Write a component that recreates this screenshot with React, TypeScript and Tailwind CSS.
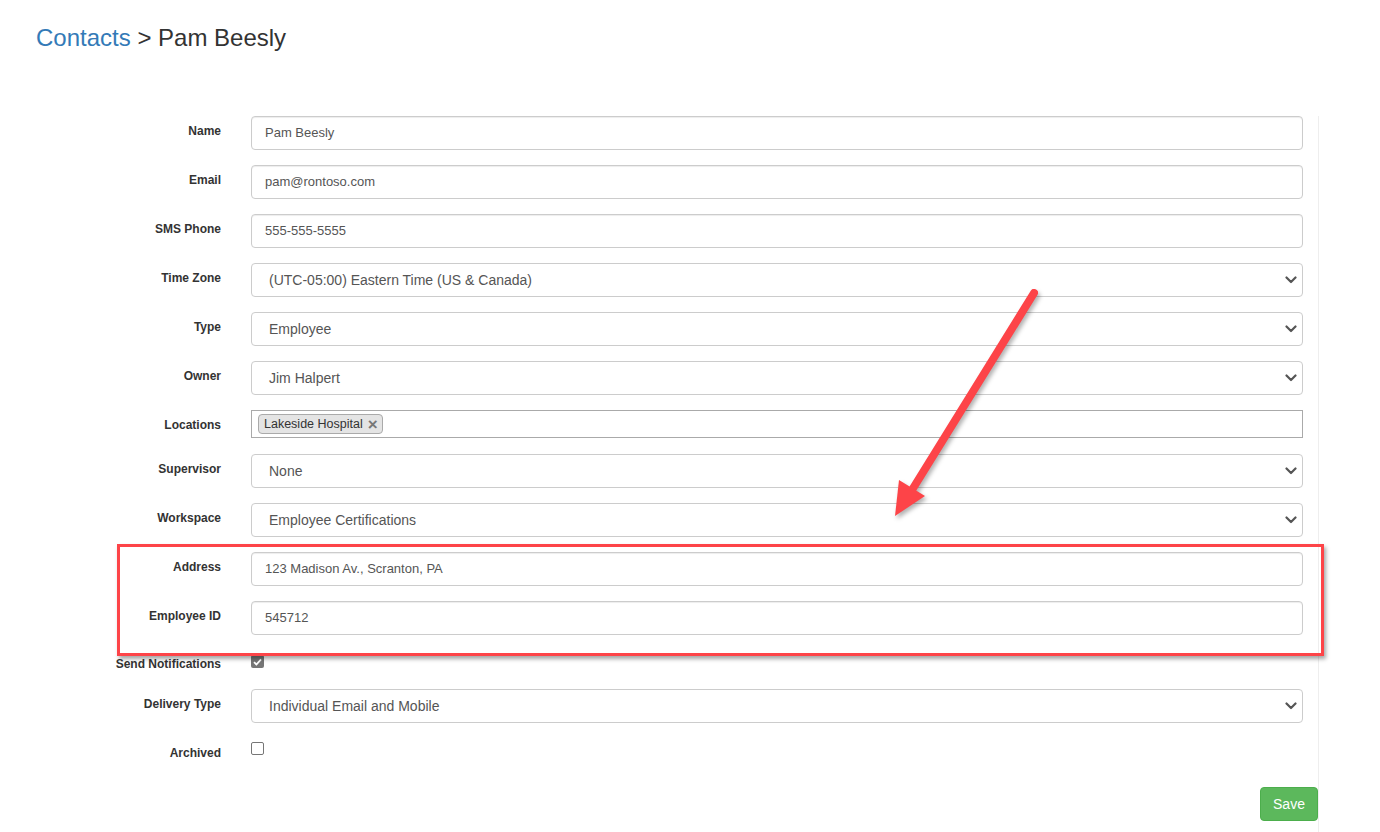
import { ReactNode } from "react"

const font = { fontFamily: '"Liberation Sans", Arial, Helvetica, sans-serif' }

function Chevron() {
    return (
        <svg width="12" height="8" viewBox="0 0 12 8" className="shrink-0">
            <polyline points="1.5,1.5 6,6 10.5,1.5" fill="none" stroke="#555" strokeWidth="2.2" strokeLinecap="round" strokeLinejoin="round" />
        </svg>
    )
}

function TextInput({ value }: { value: string }) {
    return (
        <div className="h-[34px] flex items-center pl-[13px] border border-[#ccc] rounded-[4px] bg-white text-[13px] text-[#555] shadow-[inset_0_1px_1px_rgba(0,0,0,0.075)]">
            {value}
        </div>
    )
}

function SelectBox({ value }: { value: string }) {
    return (
        <div className="h-[34px] flex items-center justify-between pl-[17px] pr-[5px] border border-[#ccc] rounded-[4px] bg-white text-[14px] text-[#555]">
            <span>{value}</span>
            <Chevron />
        </div>
    )
}

function Checkbox({ checked }: { checked?: boolean }) {
    if (checked) {
        return (
            <div className="w-[13px] h-[13px] rounded-[2px] bg-[#767676] flex items-center justify-center">
                <svg width="9" height="8" viewBox="0 0 9 8">
                    <polyline points="1,4.2 3.4,6.5 8,1.3" fill="none" stroke="white" strokeWidth="1.8" />
                </svg>
            </div>
        )
    }
    return <div className="w-[13px] h-[13px] rounded-[2px] border border-[#767676] bg-white" />
}

function Row({ label, children, tall = true, mb = "mb-[15px]" }: { label: string; children: ReactNode; tall?: boolean; mb?: string }) {
    return (
        <div className={`grid grid-cols-[221px_1fr] gap-x-[30px] pr-[15px] ${mb}`}>
            <label className={`text-right text-[12px] font-bold text-[#333] leading-[17px] ${tall ? "pt-[7px]" : "pt-[6px]"}`}>
                {label}
            </label>
            <div>{children}</div>
        </div>
    )
}

export default function App() {
    return (
        <div className="relative w-[1380px] h-[832px] overflow-hidden bg-white" style={font}>
            <h3 className="pl-[36px] pt-[25px] text-[24px] leading-[26px] text-[#333]">
                <span className="text-[#337ab7]">Contacts</span> &gt; Pam Beesly
            </h3>

            <div className="mt-[65px] w-[1319px] h-[716px] border-r border-[#eee]">
                <Row label="Name"><TextInput value="Pam Beesly" /></Row>
                <Row label="Email"><TextInput value="pam@rontoso.com" /></Row>
                <Row label="SMS Phone"><TextInput value="555-555-5555" /></Row>
                <Row label="Time Zone"><SelectBox value="(UTC-05:00) Eastern Time (US & Canada)" /></Row>
                <Row label="Type"><SelectBox value="Employee" /></Row>
                <Row label="Owner"><SelectBox value="Jim Halpert" /></Row>
                <Row label="Locations" mb="mb-[16px]">
                    <div className="h-[28px] flex items-center pl-[6px] border border-[#aaa] bg-white">
                        <div className="h-[20px] flex items-center pl-[5px] pr-[4px] border border-[#aaa] rounded-[4px] bg-[#e4e4e4] text-[12.5px] text-[#333]">
                            Lakeside Hospital
                            <span className="ml-[5px] text-[#777] font-bold text-[17px] leading-none">×</span>
                        </div>
                    </div>
                </Row>
                <Row label="Supervisor"><SelectBox value="None" /></Row>
                <Row label="Workspace"><SelectBox value="Employee Certifications" /></Row>
                <Row label="Address"><TextInput value="123 Madison Av., Scranton, PA" /></Row>
                <Row label="Employee ID"><TextInput value="545712" /></Row>
                <Row label="Send Notifications" tall={false}>
                    <div className="h-[24px] pt-[5px]"><Checkbox checked /></div>
                </Row>
                <Row label="Delivery Type"><SelectBox value="Individual Email and Mobile" /></Row>
                <Row label="Archived">
                    <div className="h-[24px] pt-[4px]"><Checkbox /></div>
                </Row>
                <div className="flex justify-end mt-[25px]">
                    <button className="w-[58px] h-[34px] rounded-[4px] bg-[#5cb85c] border border-[#4cae4c] text-white text-[14px]">
                        Save
                    </button>
                </div>
            </div>

            {/* annotation box */}
            <div className="absolute left-[117px] top-[544px] w-[1207px] h-[112px] border-[3px] border-[#fd4448] shadow-[2px_3px_4px_rgba(0,0,0,0.35)] pointer-events-none" />

            {/* annotation arrow */}
            <svg className="absolute left-0 top-0 pointer-events-none" width="1380" height="832" style={{ filter: "drop-shadow(2px 3px 2px rgba(0,0,0,0.3))" }}>
                <line x1="1034" y1="293" x2="912" y2="490" stroke="#fd4448" strokeWidth="8" strokeLinecap="round" />
                <polygon points="895,516 925,496 899,480" fill="#fd4448" />
            </svg>
        </div>
    )
}
